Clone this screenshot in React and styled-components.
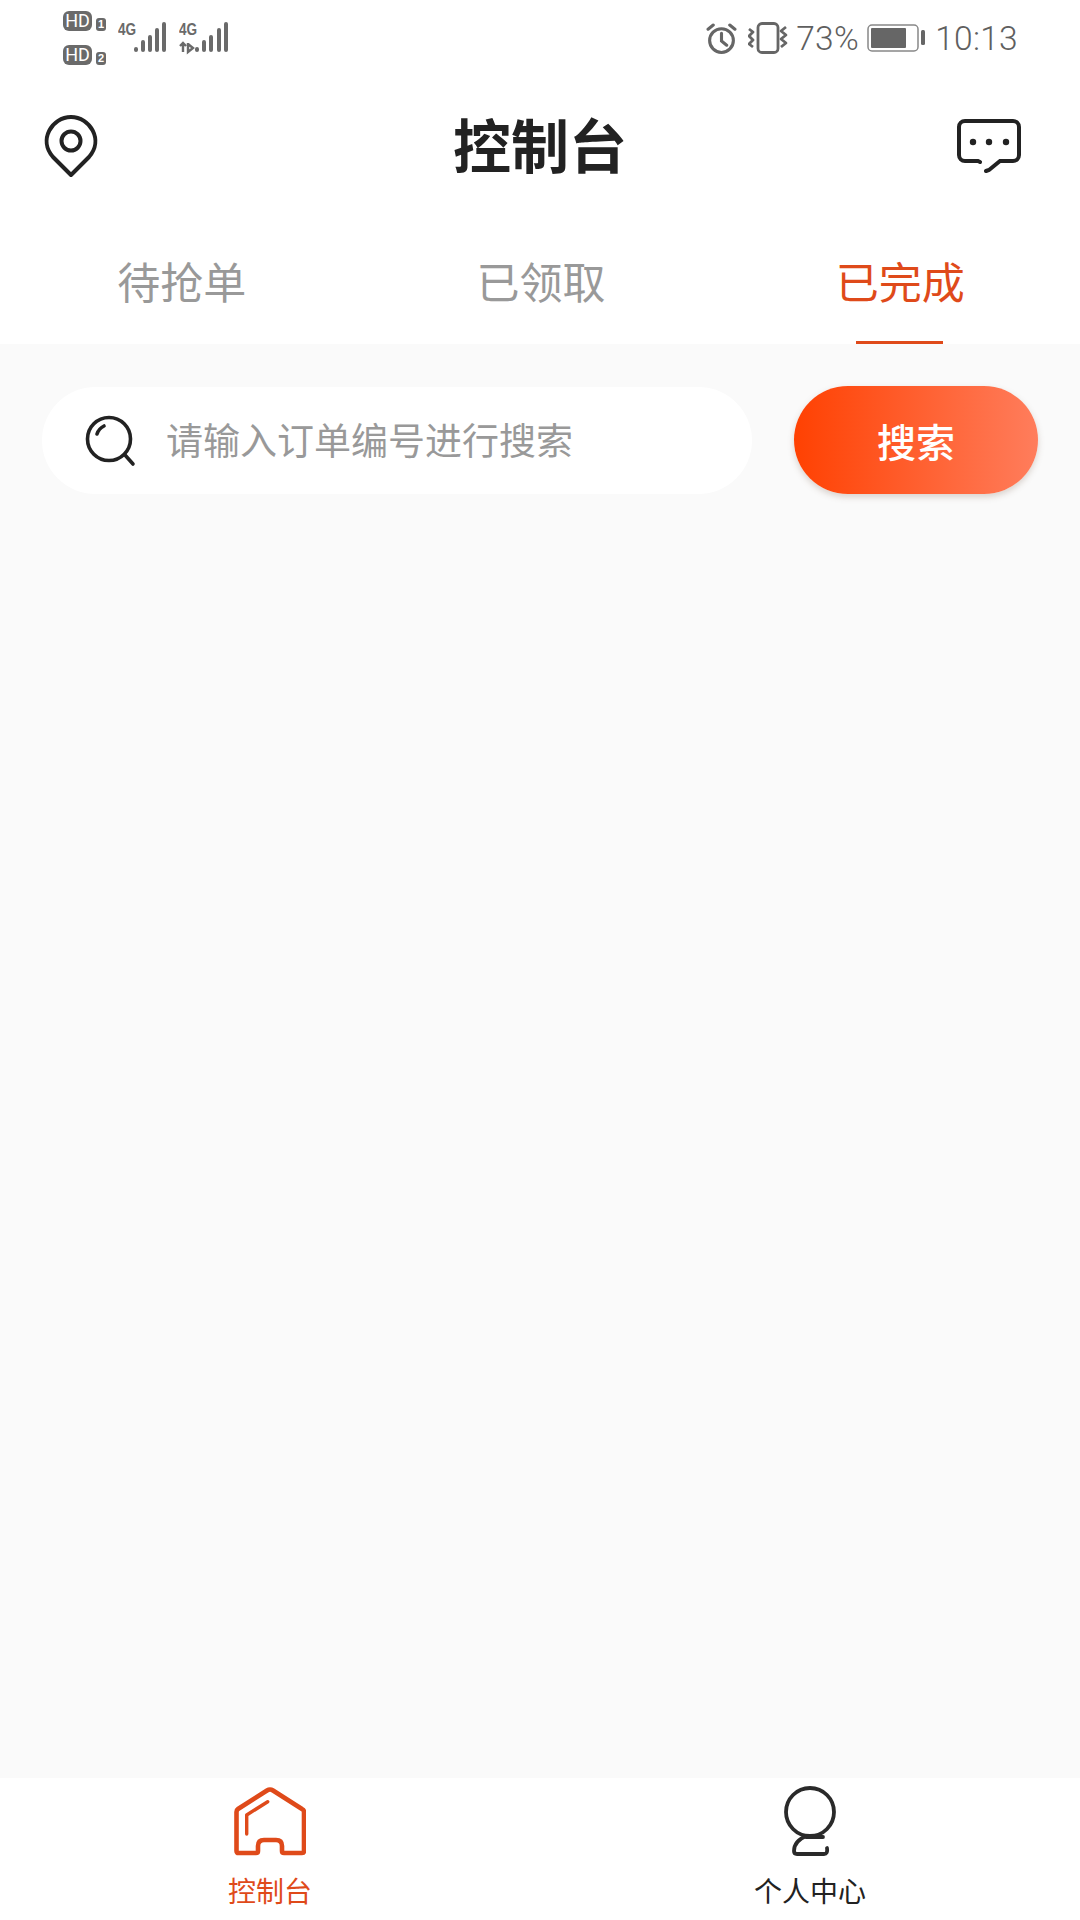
import React from 'react';
import styled, {createGlobalStyle} from 'styled-components';

const GlobalStyle = createGlobalStyle`
  html, body {
    margin: 0;
    padding: 0;
    background: #fff;
  }
  * {
    box-sizing: border-box;
  }
`;

const CJK = `Roboto, "Noto Sans CJK SC", sans-serif`;

const Page = styled.div`
  width: 1080px;
  height: 1920px;
  display: flex;
  flex-direction: column;
  font-family: ${CJK};
  background: #fafafa;
`;

const StatusBar = styled.div`
  height: 76px;
  padding: 11px 62px 0 63px;
  display: flex;
  justify-content: space-between;
  background: #fff;
  color: #5f5f5f;
`;

const StatusLeft = styled.div`
  display: flex;
  gap: 11px;
`;

const SimColumn = styled.div`
  display: flex;
  flex-direction: column;
  gap: 14px;
  width: 44px;
`;

const SimRow = styled.div`
  display: flex;
  align-items: flex-end;
  gap: 4px;
`;

const HdBadge = styled.span`
  width: 29px;
  height: 20px;
  border-radius: 6px;
  background: #6a6a6a;
  color: #fff;
  font: 400 18px/20px Roboto, sans-serif;
  text-align: center;
`;

const SimNumber = styled.span`
  width: 10px;
  height: 13px;
  border-radius: 3px;
  background: #6a6a6a;
  color: #fff;
  font: 700 11px/13px "Liberation Sans", sans-serif;
  text-align: center;
`;

const StatusRight = styled.div`
  display: flex;
  align-items: center;
  height: 44px;
  margin-top: 5px;
  font-size: 33.5px;
  font-weight: 300;
  letter-spacing: 0.3px;
`;

const Percent = styled.span`
  width: 71px;
  margin-left: 8px;
`;

const Clock = styled.span`
  margin-left: 10px;
`;

const Header = styled.header`
  height: 144px;
  padding-bottom: 4px;
  display: grid;
  grid-template-columns: 1fr auto 1fr;
  align-items: center;
  background: #fff;
`;

const HeaderEnd = styled.div`
  justify-self: end;
  display: flex;
  padding-right: 58px;
`;

const HeaderStart = styled.div`
  justify-self: start;
  display: flex;
  padding-left: 44px;
`;

const Title = styled.h1`
  margin: 4px 0 0;
  font-size: 58px;
  font-weight: 700;
  line-height: 1;
  color: #222;
`;

const Tabs = styled.nav`
  height: 124px;
  padding-left: 2px;
  display: grid;
  grid-template-columns: repeat(3, 1fr);
  background: #fff;
`;

const Tab = styled.div`
  position: relative;
  padding-top: 34px;
  display: flex;
  justify-content: center;
  font-size: 43px;
  line-height: 60px;
  color: ${props => (props.$active ? '#df4a1a' : '#999')};

  &::after {
    content: '';
    display: ${props => (props.$active ? 'block' : 'none')};
    position: absolute;
    left: 50%;
    bottom: 0;
    width: 87px;
    height: 3px;
    margin-left: -44px;
    background: #df4a1a;
  }
`;

const SearchRow = styled.div`
  padding: 43px 42px 0;
  display: flex;
  justify-content: space-between;
  align-items: flex-start;
`;

const SearchBox = styled.div`
  width: 710px;
  height: 107px;
  padding-left: 43px;
  display: flex;
  align-items: center;
  gap: 29px;
  border-radius: 54px;
  background: #fff;
`;

const Placeholder = styled.span`
  padding-top: 4px;
  font-size: 37px;
  line-height: 1;
  color: #999;
`;

const SearchButton = styled.button`
  width: 244px;
  height: 108px;
  margin-top: -1px;
  border: 0;
  border-radius: 54px;
  background: linear-gradient(90deg, #ff4102, #ff7d5c);
  box-shadow: 0 3px 6px rgba(120, 90, 70, 0.25);
  font-family: inherit;
  font-size: 39px;
  font-weight: 500;
  color: #fff;
`;

const Content = styled.main`
  flex: 1;
`;

const BottomNav = styled.nav`
  height: 142px;
  padding-top: 7px;
  display: grid;
  grid-template-columns: 1fr 1fr;
  background: #fff;
`;

const NavItem = styled.div`
  display: flex;
  flex-direction: column;
  align-items: center;
  gap: 16px;
  font-size: 28px;
  line-height: 40px;
  color: ${props => (props.$active ? '#df4a1a' : '#222')};
`;

const SimSignal = styled.div`
  width: 50px;
  height: 40px;
  position: relative;
  margin-top: 8px;
  color: #6a6a6a;
`;

const SimLabel = styled.span`
  position: absolute;
  left: 0;
  top: 3px;
  font: 700 17px/15px "Liberation Sans", sans-serif;
  transform: scaleX(0.8);
  transform-origin: left center;
`;

const Bars = ({lead}) => (
  <svg width="50" height="36" viewBox="0 0 50 36" fill="none" stroke="#6a6a6a" strokeWidth="4" strokeLinecap="round">
    {lead && <path d="M4 24v9M1 27l3-3 3 3M9 24v9l5-4-5-4" strokeWidth="2.4" strokeLinecap="butt" />}
    <path d={`M18 30v1M25 23v8M32 18v13M${lead ? 40 : 39} 11v20M${lead ? 47 : 46} 5v26`} />
  </svg>
);

const Signal = ({lead}) => (
  <SimSignal>
    <SimLabel>4G</SimLabel>
    <Bars lead={lead} />
  </SimSignal>
);

const AlarmWrap = styled.span`
  display: flex;
  margin-right: 11px;
`;

const VibrateWrap = styled.span`
  display: flex;
`;

const AlarmIcon = () => (
  <AlarmWrap>
    <svg width="31" height="31" viewBox="0 0 30 30" fill="none" stroke="#666" strokeWidth="3" strokeLinecap="round">
      <circle cx="15" cy="17" r="11.5" />
      <path d="M15 10v7.5l5 4M2 6l5-4M28 6l-5-4" />
    </svg>
  </AlarmWrap>
);

const VibrateIcon = () => (
  <VibrateWrap>
    <svg width="40" height="32" viewBox="0 0 40 32" fill="none" stroke="#666" strokeLinejoin="round">
      <rect x="10" y="1.5" width="20" height="29" rx="4" strokeWidth="2.8" />
      <path d="M1 7l4 3-4 4 4 4-4 4 4 3" strokeWidth="2.8" />
      <path d="M38 5l-5 4 5 4-5 4 5 4-5 4" strokeWidth="2.8" />
    </svg>
  </VibrateWrap>
);

const BatteryIcon = () => (
  <svg width="58" height="30" viewBox="0 0 58 30" fill="none">
    <rect x="1" y="2" width="50" height="26" rx="4" stroke="#888" strokeWidth="1.5" />
    <rect x="4" y="5" width="35" height="20" rx="1" fill="#666" />
    <rect x="54" y="7" width="4" height="15" rx="1.5" fill="#666" />
  </svg>
);

const PinIcon = () => (
  <svg width="54" height="64" viewBox="0 0 54 64" fill="none" stroke="#222" strokeWidth="4">
    <path d="M27 61 9 43C-6 26 8 3 27 3s33 23 18 40L27 61Z" strokeLinejoin="round" />
    <circle cx="27" cy="27" r="9.5" />
  </svg>
);

const ChatIcon = () => (
  <svg width="66" height="56" viewBox="0 0 66 56" stroke="#222" fill="none">
    <path d="M24 44l-2-1H9a6 6 0 0 1-6-6V9a6 6 0 0 1 6-6h48a6 6 0 0 1 6 6v28a6 6 0 0 1-6 6H44L33 52l-3 1" strokeWidth="4" strokeLinecap="round" />
    <g fill="#222" stroke="none">
      <circle cx="17" cy="24" r="3.2" />
      <circle cx="33" cy="24" r="3.2" />
      <circle cx="50" cy="24" r="3.2" />
    </g>
  </svg>
);

const SearchIcon = () => (
  <svg width="52" height="52" viewBox="0 0 52 52" fill="none" stroke="#222" strokeWidth="3.6" strokeLinecap="round">
    <circle cx="24" cy="24" r="21.5" />
    <path d="M12 19c1-3 3-6 7-8M40 40l8 9" />
  </svg>
);

const HomeIcon = () => (
  <svg width="72" height="72" viewBox="0 0 72 72" fill="none" stroke="#df4a1a" strokeWidth="4.6" strokeLinecap="round" strokeLinejoin="round">
    <path d="M2.5 27Q2.5 25 4 24L33 5.5Q36 3.5 39 5.5L68 24Q70 25 70 27V66Q70 68 68 68H50Q48 68 48 66V61Q48 55 42 55H30Q24 55 24 61V66Q24 68 22 68H4.5Q2.5 68 2.5 66Z" />
    <path d="M12.7 49V30L33.7 16.7" strokeWidth="3.4" />
  </svg>
);

const UserIcon = () => (
  <svg width="56" height="72" viewBox="0 0 56 72" fill="none" stroke="#2a2a2a" strokeWidth="3.8" strokeLinecap="round" strokeLinejoin="round">
    <circle cx="28" cy="27" r="24" />
    <path d="M24 51C17 54 12 59 12 66Q12 69 15 69H42Q46 69 45 63" />
    <path d="M24 52H41" />
  </svg>
);

function App() {
  return (
    <Page>
      <GlobalStyle />
      <StatusBar>
        <StatusLeft>
          <SimColumn>
            <SimRow><HdBadge>HD</HdBadge><SimNumber>1</SimNumber></SimRow>
            <SimRow><HdBadge>HD</HdBadge><SimNumber>2</SimNumber></SimRow>
          </SimColumn>
          <Signal />
          <Signal lead />
        </StatusLeft>
        <StatusRight>
          <AlarmIcon />
          <VibrateIcon />
          <Percent>73%</Percent>
          <BatteryIcon />
          <Clock>10:13</Clock>
        </StatusRight>
      </StatusBar>
      <Header>
        <HeaderStart><PinIcon /></HeaderStart>
        <Title>控制台</Title>
        <HeaderEnd><ChatIcon /></HeaderEnd>
      </Header>
      <Tabs>
        <Tab>待抢单</Tab>
        <Tab>已领取</Tab>
        <Tab $active>已完成</Tab>
      </Tabs>
      <SearchRow>
        <SearchBox>
          <SearchIcon />
          <Placeholder>请输入订单编号进行搜索</Placeholder>
        </SearchBox>
        <SearchButton>搜索</SearchButton>
      </SearchRow>
      <Content />
      <BottomNav>
        <NavItem $active>
          <HomeIcon />
          控制台
        </NavItem>
        <NavItem>
          <UserIcon />
          个人中心
        </NavItem>
      </BottomNav>
    </Page>
  );
}

export default App;
